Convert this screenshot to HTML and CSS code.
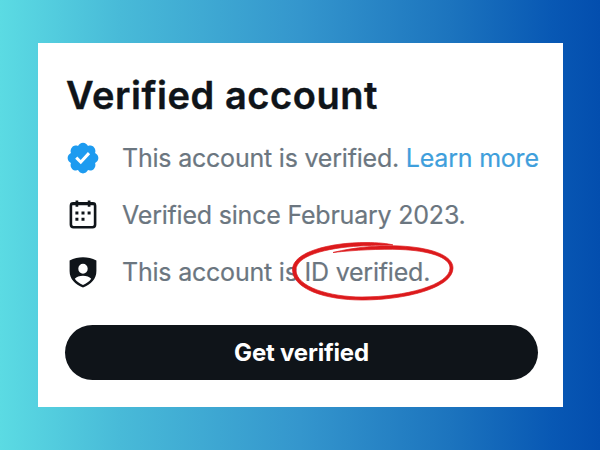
FILE: index.html
```html
<!DOCTYPE html>
<html lang="en">
<head>
  <meta charset="UTF-8">
  <meta name="viewport" content="width=device-width, initial-scale=1.0">
  <title>Verified account</title>
  <link rel="stylesheet" href="styles.css">
</head>
<body>
  <div class="card">
    <h1>Verified account</h1>

    <ul class="details">
      <li>
        <svg class="icon badge" viewBox="0 0 24 24"><path d="M22.25 12c0-1.43-.88-2.67-2.19-3.34.46-1.39.2-2.9-.81-3.91s-2.52-1.27-3.91-.81c-.66-1.31-1.91-2.19-3.34-2.19s-2.67.88-3.33 2.19c-1.4-.46-2.91-.2-3.92.81s-1.26 2.52-.8 3.91c-1.31.67-2.2 1.91-2.2 3.34s.89 2.67 2.2 3.34c-.46 1.39-.21 2.9.8 3.91s2.52 1.26 3.91.81c.67 1.31 1.91 2.19 3.34 2.19s2.68-.88 3.34-2.19c1.39.45 2.9.2 3.91-.81s1.27-2.52.81-3.91c1.31-.67 2.19-1.91 2.19-3.34zm-11.71 4.2L6.8 12.46l1.41-1.42 2.26 2.26 4.8-5.23 1.47 1.36-6.2 6.77z"/></svg>
        <span>This account is verified. <a href="#">Learn more</a></span>
      </li>
      <li>
        <svg class="icon" viewBox="0 0 36 36">
          <rect x="5.9" y="6.2" width="24.2" height="24" rx="2.6" fill="none" stroke="currentColor" stroke-width="2.6"/>
          <path d="M5.5 7h25M11.9 3.6v6.2M24.1 3.6v6.2" fill="none" stroke="currentColor" stroke-width="2.7"/>
          <path d="M10.4 14.6h3v3h-3zM16.5 14.6h3v3h-3zM22.6 14.6h3v3h-3zM10.4 20.8h3v3h-3zM16.5 20.8h3v3h-3z"/>
        </svg>
        <span>Verified since February 2023.</span>
      </li>
      <li>
        <svg class="icon" viewBox="0 0 36 36">
          <path fill-rule="evenodd" d="M18 3.2C13.5 3.2 9 4.4 4.6 6.4V17c0 8 5.4 13.4 13.4 16.6C26 30.4 31.4 25 31.4 17V6.4C27 4.4 22.5 3.2 18 3.2zM18 9.7a4.700 5 0 1 1 0 10a4.700 5 0 1 1 0-10zM9.800 24.800C11.500 22.800 14.500 21.700 18 21.700s6.500 1.100 8.200 3.100C24.300 27.500 21.500 29.400 18 30.900C14.500 29.400 11.700 27.500 9.800 24.800z"/>
        </svg>
        <span>This account is <span class="circled">ID verified.<svg class="scribble" viewBox="288 238 170 68">
          <path d="M333 252.500C355 247 380 245 400 246C430 247.500 453 255 453 268C453 288 405 300 362 300C325 300 293 289 292.500 270C292 252 330 242.500 366 242.500C378 242.500 388 243.500 393 245C380 245 370 245.500 360 246C325 248 296 256 296 270C296 287 330 297 362 297C405 297 450 285 450 268C450 257 428 250.500 400 249.500C380 248.800 355 250 333 252.500Z"/>
        </svg></span></span>
      </li>
    </ul>

    <button type="button">Get verified</button>
  </div>
</body>
</html>
```
FILE: styles.css
```css
body {
  margin: 0;
  height: 450px;
  padding: 43px 37px 43px 38px;
  box-sizing: border-box;
  overflow: hidden;
  font-family: Inter, Roboto, sans-serif;
  background: linear-gradient(to right, #5bdbe3 0%, #48bad8 20%, #3496cd 50%, #1c74be 75%, #0858b4 92%, #034eae 100%);
}

.card {
  height: 364px;
  padding: 30px 25px 27px 27px;
  box-sizing: border-box;
  background: #fff;
  display: flex;
  flex-direction: column;
}

h1 {
  margin: 0 0 12px 1px;
  font-size: 38px;
  line-height: 44px;
  font-weight: 600;
  letter-spacing: 0.55px;
  color: #0f1419;
  -webkit-text-stroke: 0.4px #0f1419;
  white-space: nowrap;
}

.details {
  margin: 0;
  padding: 0;
  list-style: none;
}

.details li {
  display: flex;
  align-items: center;
  gap: 21px;
  height: 57px;
  font-size: 25px;
  letter-spacing: -0.21px;
  color: #6b7680;
  -webkit-text-stroke: 0.2px;
  white-space: nowrap;
}

.details a {
  color: #3f9fdc;
  text-decoration: none;
}

.icon {
  width: 36px;
  height: 36px;
  flex: none;
  fill: currentColor;
  color: #0f1419;
}

.badge {
  color: #1d9bf0;
}

.circled {
  position: relative;
}

/* hand drawn ring over the text */
.scribble {
  position: absolute;
  left: -16.5px;
  top: -18.5px;
  width: 170px;
  height: 68px;
  fill: #dc1a1c;
  stroke: #dc1a1c;
  stroke-width: 0.7;
}

button {
  margin-top: auto;
  height: 55px;
  border: none;
  border-radius: 28px;
  background: #0f1419;
  color: #fff;
  font-family: inherit;
  font-size: 24px;
  font-weight: 700;
  letter-spacing: -0.2px;
}
```
